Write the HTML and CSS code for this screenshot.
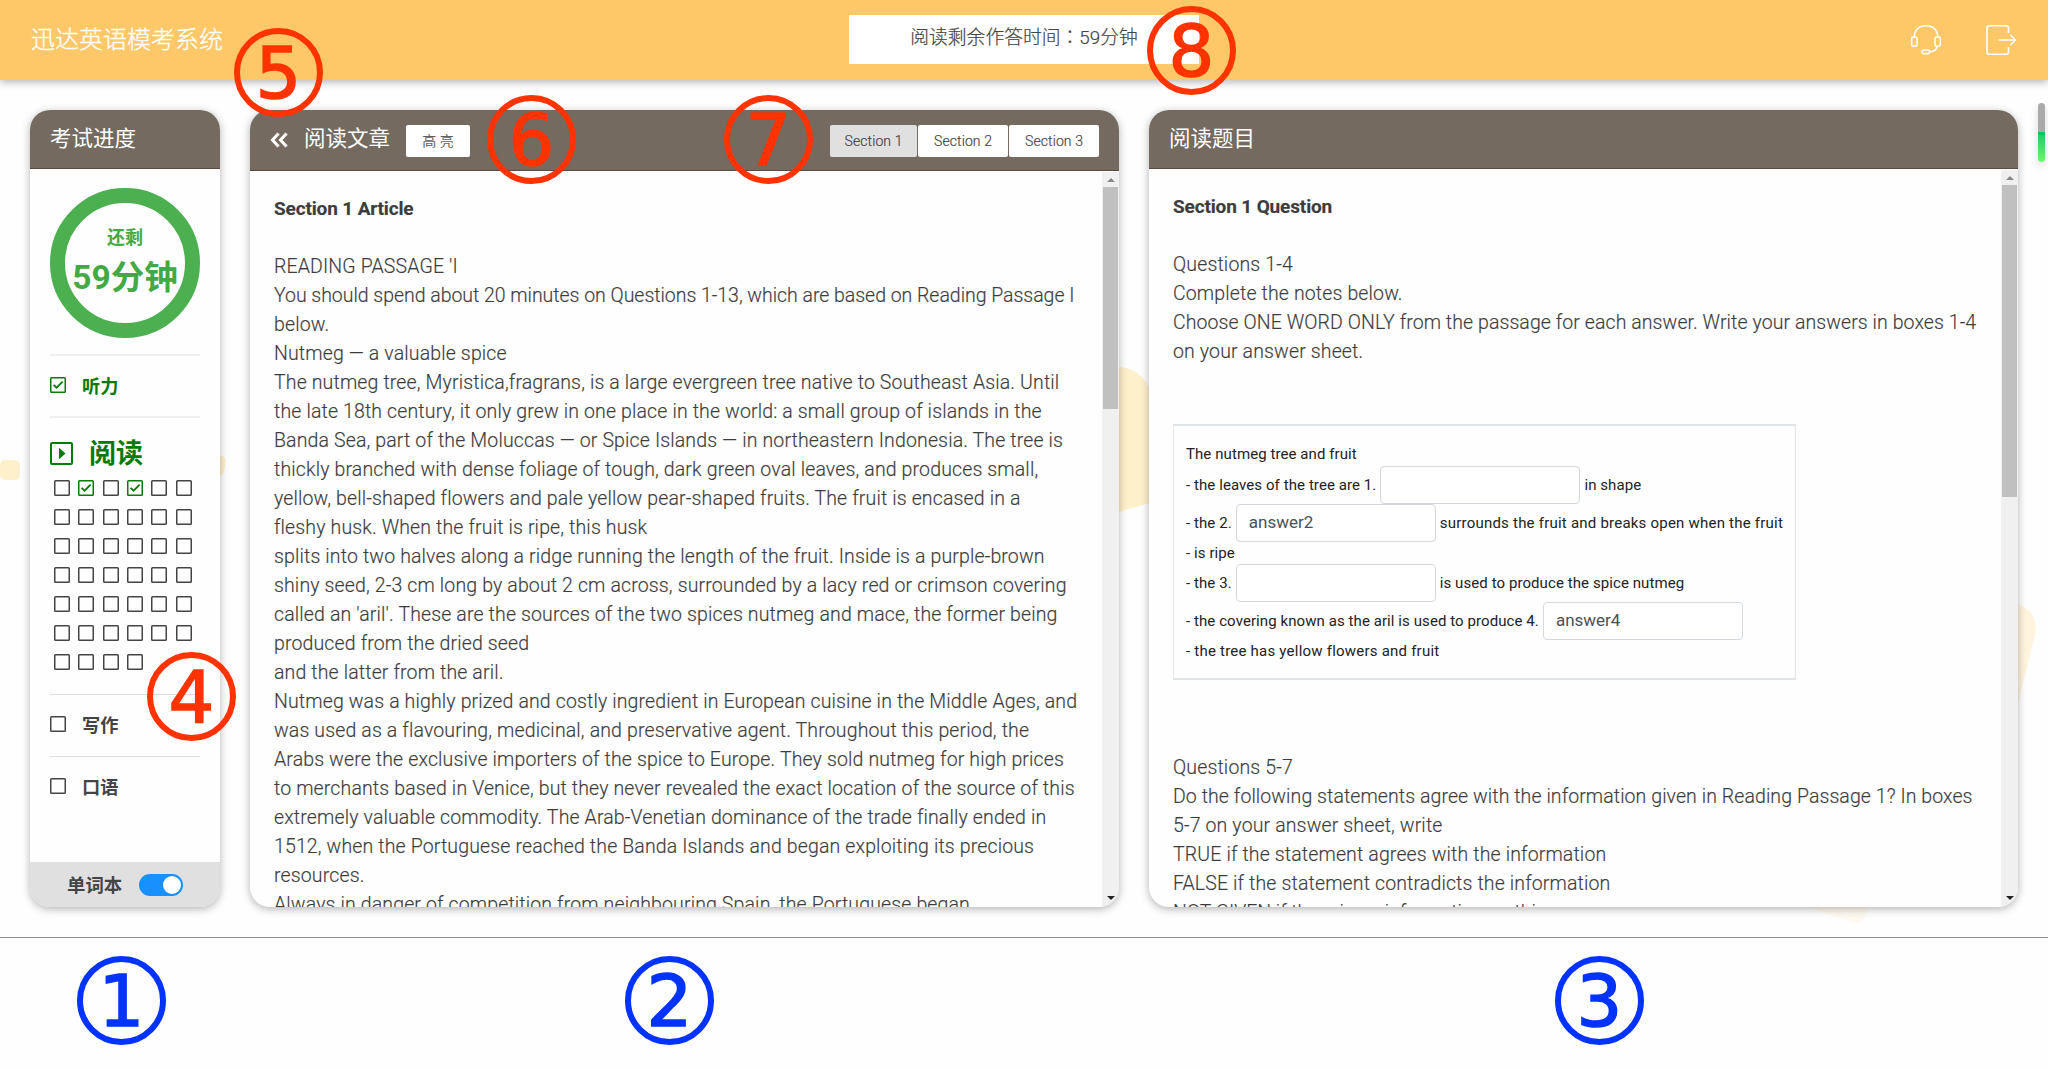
FILE: index.html
```html
<!DOCTYPE html>
<html lang="zh-CN">
<head>
<meta charset="utf-8">
<title>迅达英语模考系统</title>
<link rel="stylesheet" href="styles.css">
</head>
<body>
<svg class="backdrop" viewBox="0 0 2048 937" aria-hidden="true">
  <rect x="0" y="460" width="20" height="20" rx="5" fill="#fff0cc" transform="rotate(3 10 470)"/>
  <rect x="205" y="455" width="20" height="20" rx="5" fill="#fff0cc" transform="rotate(8 215 465)"/>
  <path d="M1100 367h18q22 1 32 22v114l-50 14z" fill="#fff0cc"/>
  <path d="M2010 603q30 4 25 32l-25 100z" fill="#fff5df"/>
  <path d="M1800 905l54 18q8 1 10-5l5-13z" fill="#fffaf0"/>
</svg>
<svg class="sprite" aria-hidden="true">
  <symbol id="box" viewBox="0 0 16 16"><rect x=".75" y=".75" width="14.5" height="14.5" rx=".8" fill="none" stroke="currentColor" stroke-width="1.5"/></symbol>
  <symbol id="done" viewBox="0 0 16 16"><rect x=".75" y=".75" width="14.5" height="14.5" rx=".8" fill="none" stroke="currentColor" stroke-width="1.5"/><path d="M3.6 7.8l3 2.9 6-6" fill="none" stroke="currentColor" stroke-width="1.8"/></symbol>
  <symbol id="play" viewBox="0 0 23 23"><rect x="1" y="1" width="21" height="21" rx="1" fill="none" stroke="currentColor" stroke-width="2"/><path d="M9 5.8v11.400l6.500-5.700z" fill="currentColor"/></symbol>
</svg>

<header class="topbar">
  <h1 class="brand">迅达英语模考系统</h1>
  <div class="timer">阅读剩余作答时间<span class="colon" lang="zh-TW">：</span>59分钟</div>
  <div class="tools">
    <svg width="32" height="32" viewBox="0 0 32 32" fill="none" stroke="#fff" stroke-width="1.600"><path d="M4.200 13.500C4.200 6 9 1.700 16 1.700S27.800 6 27.800 13.500M27.300 22q-1 5.700-8 5.700"/><rect x="1.700" y="13" width="5.300" height="9.300" rx="1.600"/><rect x="25" y="13" width="5.300" height="9.300" rx="1.600"/><rect x="12" y="26" width="7.500" height="3.600" rx="1.600"/></svg>
    <svg width="32" height="32" viewBox="0 0 32 32" fill="none" stroke="#fff" stroke-width="1.600"><path d="M23.500 9V4q0-2.300-2.300-2.300H4.300Q2 1.700 2 4v24q0 2.300 2.300 2.300h16.900q2.300 0 2.300-2.300v-5M13.500 16h17M25.500 11l5 5-5 5"/></svg>
  </div>
</header>

<main class="workspace">
  <aside class="card progress">
    <h2 class="card-head">考试进度</h2>
    <div class="steps">
      <div class="clock"><span class="clock-label">还剩</span><span class="clock-value">59分钟</span></div>
      <div class="step done"><svg class="tick"><use href="#done"/></svg>听力</div>
      <div class="step current"><svg class="play"><use href="#play"/></svg>阅读</div>
      <div class="answers">
        <svg class="tick"><use href="#box"/></svg><svg class="tick done"><use href="#done"/></svg><svg class="tick"><use href="#box"/></svg><svg class="tick done"><use href="#done"/></svg><svg class="tick"><use href="#box"/></svg><svg class="tick"><use href="#box"/></svg>
        <svg class="tick"><use href="#box"/></svg><svg class="tick"><use href="#box"/></svg><svg class="tick"><use href="#box"/></svg><svg class="tick"><use href="#box"/></svg><svg class="tick"><use href="#box"/></svg><svg class="tick"><use href="#box"/></svg>
        <svg class="tick"><use href="#box"/></svg><svg class="tick"><use href="#box"/></svg><svg class="tick"><use href="#box"/></svg><svg class="tick"><use href="#box"/></svg><svg class="tick"><use href="#box"/></svg><svg class="tick"><use href="#box"/></svg>
        <svg class="tick"><use href="#box"/></svg><svg class="tick"><use href="#box"/></svg><svg class="tick"><use href="#box"/></svg><svg class="tick"><use href="#box"/></svg><svg class="tick"><use href="#box"/></svg><svg class="tick"><use href="#box"/></svg>
        <svg class="tick"><use href="#box"/></svg><svg class="tick"><use href="#box"/></svg><svg class="tick"><use href="#box"/></svg><svg class="tick"><use href="#box"/></svg><svg class="tick"><use href="#box"/></svg><svg class="tick"><use href="#box"/></svg>
        <svg class="tick"><use href="#box"/></svg><svg class="tick"><use href="#box"/></svg><svg class="tick"><use href="#box"/></svg><svg class="tick"><use href="#box"/></svg><svg class="tick"><use href="#box"/></svg><svg class="tick"><use href="#box"/></svg>
        <svg class="tick"><use href="#box"/></svg><svg class="tick"><use href="#box"/></svg><svg class="tick"><use href="#box"/></svg><svg class="tick"><use href="#box"/></svg>
      </div>
      <div class="step thin"><svg class="tick"><use href="#box"/></svg>写作</div>
      <div class="step thin"><svg class="tick"><use href="#box"/></svg>口语</div>
    </div>
    <div class="wordbook">单词本<span class="switch"></span></div>
  </aside>

  <section class="card article">
    <div class="card-head">
      <svg class="collapse" width="18" height="16" viewBox="0 0 18 16" fill="none" stroke="#fff" stroke-width="3"><path d="M8.500 1.500L2.500 8l6 6.500M16.500 1.500L10.500 8l6 6.500"/></svg>
      <h2>阅读文章</h2>
      <button class="mark">高 亮</button>
      <div class="tabs"><button class="on">Section 1</button><button>Section 2</button><button>Section 3</button></div>
    </div>
    <div class="pane">
      <div class="prose">
        <b>Section 1 Article</b><br><br>
        READING PASSAGE 'I<br>
        <span class="tight">You should spend about 20 minutes on Questions 1-13, which are based on Reading Passage I</span><br>
        below.<br>
        Nutmeg — a valuable spice<br>
        The nutmeg tree, Myristica,fragrans, is a large evergreen tree native to Southeast Asia. Until<br>
        the late 18th century, it only grew in one place in the world: a small group of islands in the<br>
        Banda Sea, part of the Moluccas — or Spice Islands — in northeastern Indonesia. The tree is<br>
        thickly branched with dense foliage of tough, dark green oval leaves, and produces small,<br>
        yellow, bell-shaped flowers and pale yellow pear-shaped fruits. The fruit is encased in a<br>
        fleshy husk. When the fruit is ripe, this husk<br>
        splits into two halves along a ridge running the length of the fruit. Inside is a purple-brown<br>
        shiny seed, 2-3 cm long by about 2 cm across, surrounded by a lacy red or crimson covering<br>
        called an 'aril'. These are the sources of the two spices nutmeg and mace, the former being<br>
        produced from the dried seed<br>
        and the latter from the aril.<br>
        Nutmeg was a highly prized and costly ingredient in European cuisine in the Middle Ages, and<br>
        was used as a flavouring, medicinal, and preservative agent. Throughout this period, the<br>
        Arabs were the exclusive importers of the spice to Europe. They sold nutmeg for high prices<br>
        to merchants based in Venice, but they never revealed the exact location of the source of this<br>
        extremely valuable commodity. The Arab-Venetian dominance of the trade finally ended in<br>
        1512, when the Portuguese reached the Banda Islands and began exploiting its precious<br>
        resources.<br>
        Always in danger of competition from neighbouring Spain, the Portuguese began
      </div>
      <div class="scrollbar"><i class="up"></i><i class="thumb"></i><i class="down"></i></div>
    </div>
  </section>

  <section class="card questions">
    <h2 class="card-head">阅读题目</h2>
    <div class="pane">
      <div class="prose">
        <b>Section 1 Question</b><br><br>
        Questions 1-4<br>
        Complete the notes below.<br>
        <span class="caps">Choose ONE WORD ONLY from the passage for each answer. Write your answers in boxes 1-4</span><br>
        on your answer sheet.
        <div class="notes">
          <div class="line">The nutmeg tree and fruit</div>
          <div class="line field">- the leaves of the tree are 1.<input>in shape</div>
          <div class="line field">- the 2.<input value="answer2"><span class="wide">surrounds the fruit and breaks open when the fruit</span></div>
          <div class="line">- is ripe</div>
          <div class="line field">- the 3.<input>is used to produce the spice nutmeg</div>
          <div class="line field">- the covering known as the aril is used to produce 4.<input value="answer4"></div>
          <div class="line wide">- the tree has yellow flowers and fruit</div>
        </div>
        Questions 5-7<br>
        <span class="caps">Do the following statements agree with the information given in Reading Passage 1? In boxes</span><br>
        5-7 on your answer sheet, write<br>
        TRUE if the statement agrees with the information<br>
        FALSE if the statement contradicts the information<br>
        <span class="tight">NOT GIVEN if there is no information on this</span>
      </div>
      <div class="scrollbar"><i class="up"></i><i class="thumb"></i><i class="down"></i></div>
    </div>
  </section>
</main>

<footer class="legend"></footer>

<div class="page-thumb"></div>
<span class="callout blue c1">1</span>
<span class="callout blue c2">2</span>
<span class="callout blue c3">3</span>
<span class="callout c4">4</span>
<span class="callout c5">5</span>
<span class="callout c6">6</span>
<span class="callout c7">7</span>
<span class="callout c8">8</span>
</body>
</html>
```
FILE: styles.css
```css
* { box-sizing: border-box; }
body {
  margin: 0;
  height: 1069px;
  display: flex;
  flex-direction: column;
  overflow: hidden;
  position: relative;
  background: #fefefe;
  color: #444;
  font-family: Roboto, "Noto Sans CJK SC", sans-serif;
}
h1, h2 { margin: 0; font-weight: 400; }
.backdrop { position: absolute; left: 0; top: 0; width: 2048px; height: 937px; z-index: -1; }
.sprite { position: absolute; width: 0; height: 0; }

.topbar {
  height: 80px;
  flex: none;
  display: grid;
  grid-template-columns: 1fr 350px 1fr;
  align-items: center;
  padding: 0 31px;
  background: #fec768;
  box-shadow: 0 2px 8px rgba(0, 0, 0, .3);
}
.brand { font-size: 24px; font-weight: 300; line-height: 78px; color: #fff; -webkit-text-stroke: .3px; }
.timer {
  height: 49px;
  margin-bottom: 2px;
  line-height: 47px;
  background: #fff;
  text-align: center;
  font-size: 18.8px;
  font-weight: 300;
  -webkit-text-stroke: .2px;
}
.colon { font-family: "Noto Sans CJK TC", sans-serif; line-height: 1; }
.tools { display: flex; justify-content: flex-end; gap: 43px; }

.workspace {
  display: grid;
  grid-template-columns: 190px 869px 869px;
  gap: 30px;
  height: 857px;
  padding: 30px 30px 30px;
  flex: none;
}
.card {
  height: 797px;
  display: flex;
  flex-direction: column;
  overflow: hidden;
  border-radius: 20px;
  background: #fefefe;
  box-shadow: 0 2px 8px rgba(0, 0, 0, .3);
}
.card-head {
  height: 59px;
  flex: none;
  padding-left: 20px;
  background: #746a5f;
  border-bottom: 1px solid #5a4a42;
  color: #fff;
  font-size: 21.5px;
  line-height: 57px;
}

.steps { flex: 1; padding: 19px 20px 0; }
.clock {
  width: 150px;
  height: 150px;
  margin-bottom: 16px;
  border: 15px solid #4caf50;
  border-radius: 50%;
  display: flex;
  flex-direction: column;
  align-items: center;
  color: #43a944;
  font-weight: 700;
  white-space: nowrap;
}
.clock-label { font-size: 18px; line-height: 24px; margin-top: 23px; }
.clock-value { font-size: 33.5px; line-height: 44px; margin-top: 6px; }
.step {
  height: 62px;
  display: flex;
  align-items: center;
  gap: 16px;
  padding-bottom: 3px;
  border-top: 2px solid #eee;
  font-size: 18.2px;
  font-weight: 700;
}
.step.thin { border-top: 1px solid #ddd; }
.done, .current { color: #087a08; }
.step.current { height: 64px; padding: 9px 0 0; font-size: 27px; line-height: 40px; }
.tick { width: 16px; height: 16px; }
.play { width: 23px; height: 23px; }
.answers {
  display: grid;
  grid-template-columns: repeat(6, 16px);
  gap: 13px 8.330px;
  padding-left: 4px;
  height: 214px;
  align-content: start;
}
.wordbook {
  height: 45px;
  display: flex;
  align-items: center;
  padding: 0 0 2px 37px;
  gap: 17px;
  background: #e0e0e0;
  font-size: 18.4px;
  font-weight: 700;
}
.switch { width: 44px; height: 22px; border-radius: 11px; background: #1890ff; padding: 2px; margin-top: 3px; }
.switch::after { content: ""; display: block; width: 18px; height: 18px; margin-left: 22px; border-radius: 50%; background: #fff; }

.article .card-head { height: 61px; display: flex; align-items: center; }
.article h2 { font-size: 21.5px; line-height: 57px; margin-left: 16px; margin-top: -3px; }
button {
  height: 32px;
  padding: 0;
  border: 0;
  background: #fff;
  border-radius: 2px;
  color: #444;
  font: 300 14px Roboto, "Noto Sans CJK SC", sans-serif;
  letter-spacing: .1px;
  -webkit-text-stroke: .2px;
}
.mark { width: 64px; margin-left: 16px; margin-top: 2px; padding-bottom: 2px; }
.tabs { display: flex; margin: 2px 20px 0 auto; gap: 1px; }
.tabs button { width: 90px; }
.tabs .on { width: 87px; background: #e0e0e0; }

.pane { flex: 1; min-height: 0; display: flex; }
.prose {
  flex: 1;
  height: 737px;
  overflow: hidden;
  padding: 23px 0 0 24px;
  white-space: nowrap;
  font-size: 19.5px;
  font-weight: 300;
  line-height: 29px;
  letter-spacing: .14px;
  color: #3c3c3c;
  -webkit-text-stroke: .15px;
}
.tight { letter-spacing: -.03px; }
.caps { letter-spacing: .08px; }
.prose b { font-weight: 700; font-size: 19px; letter-spacing: -.14px; }
.questions .prose { height: 738px; }
.scrollbar { width: 17px; margin-top: 1px; display: flex; flex-direction: column; align-items: center; background: #f0f0f0; }
.up, .down { width: 0; height: 0; border: 4px solid transparent; border-top: 0; }
.up { margin-top: 6px; border-bottom: 4px solid #888; }
.thumb { width: 15px; height: 222px; margin-top: 5px; background: #c0c0c0; }
.questions .thumb { height: 312px; }
.down { border: 4px solid transparent; border-bottom: 0; border-top: 4px solid #222; margin: auto 0 7px; }

.notes {
  width: 623px;
  height: 256px;
  margin: 58px 0 73px;
  padding: 17px 0 0 12px;
  border: 1px solid #e2e5e8;
  border-width: 2px 1px;
  color: #222;
  font-size: 15px;
  font-weight: 400;
  letter-spacing: .08px;
  -webkit-text-stroke: 0;
}
.wide { letter-spacing: .22px; }
.line { height: 22.500px; line-height: 22px; }
.field { height: 38px; display: flex; align-items: center; }
input {
  width: 200px;
  height: 38px;
  margin: 0 4px;
  padding: 0 12px 2px;
  border: 1.500px solid #d4d9de;
  border-radius: 4px;
  background: #fff;
  color: #495057;
  font: 400 17px Roboto, sans-serif;
}

.legend { flex: 1; border-top: 1px solid #8c9194; background: #fefefe; }
.page-thumb {
  position: absolute;
  left: 2038px;
  top: 103px;
  width: 7px;
  height: 59px;
  border-radius: 4px;
  background: linear-gradient(#aaa 0 29px, #12c25a 29px 32px, #22cf68 32px, #72f275);
  box-shadow: 0 4px 8px rgba(0, 0, 0, .15);
}
.callout {
  position: absolute;
  width: 89px;
  height: 89px;
  border: 6.500px solid;
  border-radius: 50%;
  color: #ff3300;
  text-align: center;
  font: 72px/78px "DejaVu Sans", sans-serif;
  -webkit-text-stroke: 1.6px;
}
.blue { color: #0033ff; }
.c1 { left: 77px; top: 956px; }
.c2 { left: 625px; top: 956px; }
.c3 { left: 1555px; top: 956px; }
.c4 { left: 147px; top: 652px; }
.c5 { left: 234px; top: 28px; }
.c6 { left: 487px; top: 95px; }
.c7 { left: 724px; top: 95px; }
.c8 { left: 1147px; top: 6px; }
```
